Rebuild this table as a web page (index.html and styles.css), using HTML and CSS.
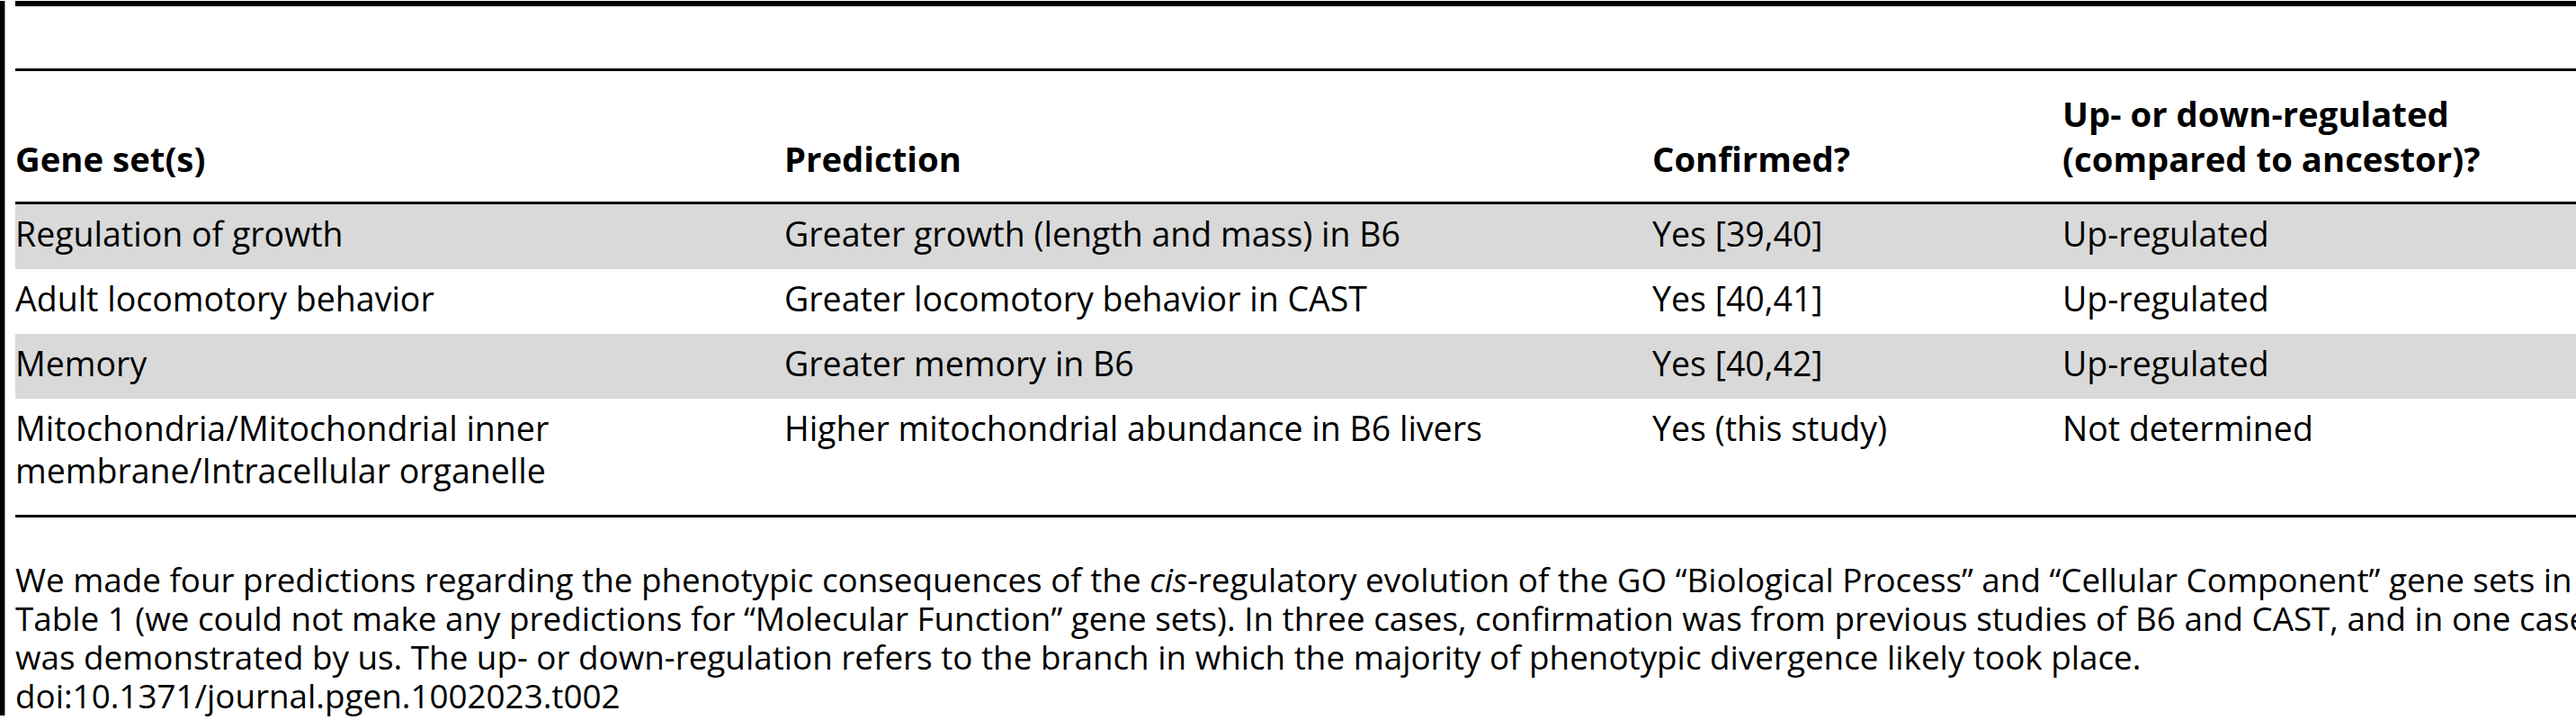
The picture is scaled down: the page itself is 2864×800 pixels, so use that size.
FILE: index.html
```html
<!DOCTYPE html>
<html lang="en">
<head>
<meta charset="utf-8">
<title>Table 2</title>
<link rel="stylesheet" href="styles.css">
</head>
<body>
<div class="page">
  <div class="table-frame">
    <div class="title-space"></div>
    <table class="data">
      <colgroup>
        <col class="c1"><col class="c2"><col class="c3"><col class="c4">
      </colgroup>
      <thead>
        <tr>
          <th>Gene set(s)</th>
          <th>Prediction</th>
          <th>Confirmed?</th>
          <th>Up- or down-regulated<br>(compared to ancestor)?</th>
        </tr>
      </thead>
      <tbody>
        <tr class="shade">
          <td>Regulation of growth</td>
          <td>Greater growth (length and mass) in B6</td>
          <td>Yes [39,40]</td>
          <td>Up-regulated</td>
        </tr>
        <tr>
          <td>Adult locomotory behavior</td>
          <td>Greater locomotory behavior in CAST</td>
          <td>Yes [40,41]</td>
          <td>Up-regulated</td>
        </tr>
        <tr class="shade">
          <td>Memory</td>
          <td>Greater memory in B6</td>
          <td>Yes [40,42]</td>
          <td>Up-regulated</td>
        </tr>
        <tr class="last">
          <td>Mitochondria/Mitochondrial inner<br>membrane/Intracellular organelle</td>
          <td>Higher mitochondrial abundance in B6 livers</td>
          <td>Yes (this study)</td>
          <td>Not determined</td>
        </tr>
      </tbody>
    </table>
  </div>
  <p class="caption">We made four predictions regarding the phenotypic consequences of the <i>cis</i>-regulatory evolution of the GO “Biological Process” and “Cellular Component” gene sets in<br>Table 1 (we could not make any predictions for “Molecular Function” gene sets). In three cases, confirmation was from previous studies of B6 and CAST, and in one case<br>was demonstrated by us. The up- or down-regulation refers to the branch in which the majority of phenotypic divergence likely took place.</p>
  <p class="doi">doi:10.1371/journal.pgen.1002023.t002</p>
</div>
</body>
</html>
```

FILE: styles.css
```css
html, body {
  margin: 0;
  padding: 0;
  background: #fff;
}

body {
  width: 2864px;
  height: 800px;
  overflow: hidden;
  font-family: "Open Sans", "Noto Sans", sans-serif;
  font-size: 37.5px;
  color: #000;
}

.page {
  width: 3000px;
  border-left: 5px solid #000;
  box-shadow: inset 1px 0 0 #9a9a9a;
  padding-left: 12px;
  box-sizing: border-box;
}

.table-frame {
  margin-top: 1px;
  border-top: 6px solid #000;
  width: 2960px;
}

.title-space {
  height: 69px;
}

.data {
  width: 2960px;
  table-layout: fixed;
  border-collapse: separate;
  border-spacing: 0;
  border-top: 3px solid #000;
  border-bottom: 3px solid #000;
}

.c1 { width: 855px; }
.c2 { width: 965px; }
.c3 { width: 456px; }
.c4 { width: 684px; }

.data th {
  font-size: 38.3px;
  font-weight: 700;
  text-align: left;
  vertical-align: bottom;
  line-height: 50px;
  padding: 22px 0 23px 0;
  border-bottom: 3px solid #000;
  white-space: nowrap;
}

.data td {
  text-align: left;
  vertical-align: top;
  line-height: 47px;
  padding: 9px 0 16px 0;
  white-space: nowrap;
}

.data tr.shade td {
  background: #d9d9d9;
}

.data tr.last td {
  padding-bottom: 26px;
}

.caption {
  margin: 48px 0 0 0;
  font-size: 36.8px;
  line-height: 43px;
  white-space: nowrap;
}

.doi {
  margin: 0;
  font-size: 36.8px;
  line-height: 43px;
  white-space: nowrap;
}
```
